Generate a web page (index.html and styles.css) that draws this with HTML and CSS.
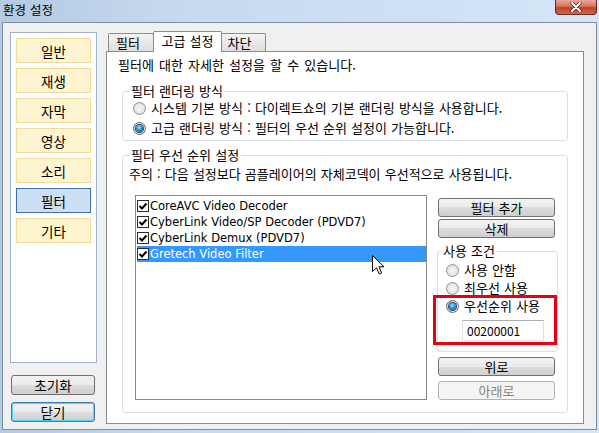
FILE: index.html
```html
<!DOCTYPE html>
<html lang="ko">
<head>
<meta charset="utf-8">
<title>환경 설정</title>
<link rel="stylesheet" href="styles.css">
</head>
<body>
<div class="window">
  <div class="titlebar">
    <span class="title">환경 설정</span>
    <div class="close">
      <svg width="12" height="10" viewBox="0 0 12 10"><path d="M2 1 L10 9 M10 1 L2 9" stroke="#5a1f18" stroke-width="3.4" stroke-linecap="round"/><path d="M2 1 L10 9 M10 1 L2 9" stroke="#ffffff" stroke-width="2" stroke-linecap="round"/></svg>
    </div>
  </div>
  <div class="client">
    <div class="sidebar">
      <div class="catlist">
        <div class="cat">일반</div>
        <div class="cat">재생</div>
        <div class="cat">자막</div>
        <div class="cat">영상</div>
        <div class="cat">소리</div>
        <div class="cat sel">필터</div>
        <div class="cat">기타</div>
      </div>
      <div class="side-btns">
        <div class="btn big">초기화</div>
        <div class="btn big default">닫기</div>
      </div>
    </div>
    <div class="tabs">
      <div class="tabstrip">
        <div class="tab t1">필터</div>
        <div class="tab t2 active">고급 설정</div>
        <div class="tab t3">차단</div>
      </div>
      <div class="pane">
        <p class="desc">필터에 대한 자세한 설정을 할 수 있습니다.</p>
        <fieldset class="group g-render">
          <legend>필터 랜더링 방식</legend>
          <div class="render-body">
            <div class="radio-row"><span class="radio"></span><span>시스템 기본 방식 : 다이렉트쇼의 기본 랜더링 방식을 사용합니다.</span></div>
            <div class="radio-row"><span class="radio checked"></span><span>고급 랜더링 방식 : 필터의 우선 순위 설정이 가능합니다.</span></div>
          </div>
        </fieldset>
        <fieldset class="group g-prio">
          <legend>필터 우선 순위 설정</legend>
          <p class="note">주의 : 다음 설정보다 곰플레이어의 자체코덱이 우선적으로 사용됩니다.</p>
          <div class="prio-body">
            <div class="listbox">
              <div class="item"><span class="chk"><svg width="12" height="12" viewBox="0 0 12 12"><rect x="0.5" y="0.5" width="11" height="11" fill="#fff" stroke="#2a2a2a"/><path d="M2.5 6 L5 8.5 L9.5 3.5" fill="none" stroke="#000" stroke-width="2"/></svg></span><span>CoreAVC Video Decoder</span></div>
              <div class="item"><span class="chk"><svg width="12" height="12" viewBox="0 0 12 12"><rect x="0.5" y="0.5" width="11" height="11" fill="#fff" stroke="#2a2a2a"/><path d="M2.5 6 L5 8.5 L9.5 3.5" fill="none" stroke="#000" stroke-width="2"/></svg></span><span>CyberLink Video/SP Decoder (PDVD7)</span></div>
              <div class="item"><span class="chk"><svg width="12" height="12" viewBox="0 0 12 12"><rect x="0.5" y="0.5" width="11" height="11" fill="#fff" stroke="#2a2a2a"/><path d="M2.5 6 L5 8.5 L9.5 3.5" fill="none" stroke="#000" stroke-width="2"/></svg></span><span>CyberLink Demux (PDVD7)</span></div>
              <div class="item selected"><span class="chk"><svg width="12" height="12" viewBox="0 0 12 12"><rect x="0.5" y="0.5" width="11" height="11" fill="#fff" stroke="#2a2a2a"/><path d="M2.5 6 L5 8.5 L9.5 3.5" fill="none" stroke="#000" stroke-width="2"/></svg></span><span class="itext">Gretech Video Filter</span></div>
            </div>
            <div class="side-col">
              <div class="btn b-add">필터 추가</div>
              <div class="btn b-del">삭제</div>
              <fieldset class="group g-use">
                <legend>사용 조건</legend>
                <div class="use-body">
                  <div class="radio-row small"><span class="radio"></span><span>사용 안함</span></div>
                  <div class="radio-row small"><span class="radio"></span><span>최우선 사용</span></div>
                  <div class="radio-row small"><span class="radio checked"></span><span>우선순위 사용</span></div>
                  <div class="textbox">00200001</div>
                </div>
              </fieldset>
              <div class="btn b-up">위로</div>
              <div class="btn b-down disabled">아래로</div>
            </div>
          </div>
        </fieldset>
      </div>
    </div>
  </div>
  <div class="highlight"></div>
  <svg class="cursor" width="13" height="21" viewBox="0 0 13 21"><path d="M0.5 0.5 L0.5 16.5 L4.5 12.8 L7.2 19 L9.6 18 L7 11.8 L12 11.8 Z" fill="#fff" stroke="#000" stroke-width="1" stroke-linejoin="miter"/></svg>
</div>
</body>
</html>
```

FILE: styles.css
```css
* { box-sizing: border-box; }
html, body { margin: 0; padding: 0; }
body {
  width: 599px;
  height: 433px;
  overflow: hidden;
  font-family: "Noto Sans CJK KR", "Noto Sans", sans-serif;
  font-size: 13px;
  word-spacing: 0.5px;
  color: #000;
}
.window {
  position: relative;
  width: 599px;
  height: 433px;
  display: flex;
  flex-direction: column;
  background: linear-gradient(90deg, #b3cae1 0%, #c6daef 30%, #d4e6f8 100%);
}
.titlebar {
  height: 22px;
  display: flex;
  justify-content: space-between;
  align-items: flex-start;
}
.title {
  padding: 1px 0 0 3px;
  line-height: 18px;
  font-size: 12.5px;
}
.close {
  width: 42px;
  height: 15px;
  margin-right: 2px;
  border: 1px solid #6b2a22;
  border-top: none;
  border-radius: 0 0 4px 4px;
  background: linear-gradient(#e9a898 0%, #d6735c 45%, #c2412b 55%, #d2644c 100%);
  display: flex;
  align-items: center;
  justify-content: center;
}
.close svg { display: block; }
.client {
  margin: 0 2px;
  height: 408px;
  border: 1px solid #7b8ea3;
  background: #f0f0f0;
  display: flex;
  gap: 9px;
  padding: 8px 12px 5px 7px;
}
.sidebar {
  width: 87px;
  flex: none;
  display: flex;
  flex-direction: column;
  padding-top: 1px;
}
.catlist {
  height: 331px;
  border: 1px solid #a3b3c7;
  background: #fff;
  padding: 5px;
  display: flex;
  flex-direction: column;
  gap: 5px;
}
.cat {
  height: 25px;
  border: 1px solid #f0da9c;
  background: #fef4d0;
  display: flex;
  align-items: center;
  justify-content: center;
  font-size: 13.5px;
}
.cat.sel {
  background: #cddff4;
  border-color: #3d6ea6;
}
.side-btns {
  margin-top: 12px;
  margin-left: 1px;
  width: 84px;
  display: flex;
  flex-direction: column;
  gap: 7px;
}
.btn {
  height: 19px;
  border: 1px solid #707070;
  border-radius: 3px;
  background: linear-gradient(#f2f2f2 0%, #ebebeb 50%, #dddddd 50%, #cfcfcf 100%);
  display: flex;
  align-items: center;
  justify-content: center;
  line-height: 15px;
}
.btn.big { height: 20px; font-size: 13.5px; }
.btn.default {
  border-color: #3c7fb1;
  box-shadow: inset 0 0 0 1px #52d0f8;
}
.btn.disabled {
  border-color: #adb2b5;
  background: #f4f4f4;
  color: #838383;
}
.tabs {
  flex: 1;
  display: flex;
  flex-direction: column;
}
.tabstrip {
  height: 20px;
  display: flex;
  align-items: flex-end;
  padding-left: 2px;
}
.tab {
  height: 18px;
  border: 1px solid #898c95;
  border-bottom: none;
  border-radius: 2px 2px 0 0;
  background: linear-gradient(#f4f4f4 0%, #e9e9e9 50%, #dedede 100%);
  display: flex;
  align-items: center;
  justify-content: center;
  line-height: 15px;
}
.tab + .tab { margin-left: -1px; }
.t1 { width: 46px; padding-right: 6px; }
.t2 { width: 69px; }
.t3 { width: 45px; padding-right: 8px; }
.tab.active {
  height: 21px;
  margin-bottom: -1px;
  padding-bottom: 3px;
  background: #fff;
  position: relative;
  z-index: 1;
}
.pane {
  flex: 1;
  border: 1px solid #898c95;
  background: #fff;
  padding: 6px 15px 0 15px;
}
.desc {
  margin: 0 0 12px -4px;
  line-height: 14px;
  word-spacing: 1.5px;
}
fieldset.group {
  margin: 0;
  padding: 0;
  min-width: 0;
  border: 1px solid #d5dfe5;
  border-radius: 3px;
}
fieldset.group legend {
  padding: 0 2px;
  margin-left: 6px;
  line-height: 14px;
}
.render-body { padding: 0 0 2px 10px; }
.radio-row {
  height: 20px;
  display: flex;
  align-items: center;
  gap: 5px;
  line-height: 14px;
}
.radio {
  width: 13px;
  height: 13px;
  flex: none;
  border-radius: 50%;
  border: 1px solid #8e9194;
  background: radial-gradient(circle at 50% 50%, #f6f6f6 0%, #e8e8e8 55%, #cfcfcf 100%);
  display: flex;
  align-items: center;
  justify-content: center;
}
.radio.checked { border-color: #5f6b78; }
.radio.checked::after {
  content: "";
  width: 7px;
  height: 7px;
  border-radius: 50%;
  background: radial-gradient(circle at 45% 35%, #9be7ff 0%, #2b95da 45%, #0e3f78 100%);
  box-shadow: 0 0 0 1px #1f3f66;
}
.g-prio { margin-top: 7px !important; }
.note {
  margin: 5px 0 0 6px;
  line-height: 14px;
}
.prio-body {
  margin-top: 14px;
  padding: 0 12px 12px 12px;
  display: flex;
  gap: 11px;
}
.listbox {
  width: 292px;
  height: 205px;
  flex: none;
  border: 1px solid #828790;
  background: #fff;
  padding: 2px 0 0 1px;
}
.item {
  height: 16px;
  display: flex;
  align-items: center;
  gap: 1px;
  line-height: 14px;
  font-family: "DejaVu Sans", "Noto Sans", sans-serif;
  font-size: 11.5px;
  word-spacing: 0;
}
.chk { width: 12px; height: 12px; flex: none; display: block; }
.chk svg { display: block; }
.item.selected {
  background: #3399ff;
  color: #fff;
}
.side-col {
  width: 117px;
  flex: none;
  display: flex;
  flex-direction: column;
}
.b-add { margin-top: 3px; }
.b-del { margin-top: 2px; }
.g-use {
  margin: 6px -3px 0 -1px !important;
}
.g-use legend { margin-left: 3px !important; }
.use-body { padding: 3px 0 10px 8px; }
.radio-row.small { height: 18px; }
.textbox {
  margin: 5px 0 0 16px;
  width: 82px;
  height: 21px;
  border: 1px solid;
  border-color: #abadb3 #dbdfe6 #e3e9ef #e2e3ea;
  background: #fff;
  padding-left: 4px;
  line-height: 19px;
  font-size: 12px;
}
.b-up { margin-top: 5px; }
.b-down { margin-top: 5px; }
.highlight {
  position: absolute;
  left: 433px;
  top: 295px;
  width: 124px;
  height: 50px;
  border: 3px solid #e60012;
}
.cursor {
  position: absolute;
  left: 372px;
  top: 255px;
}
```
